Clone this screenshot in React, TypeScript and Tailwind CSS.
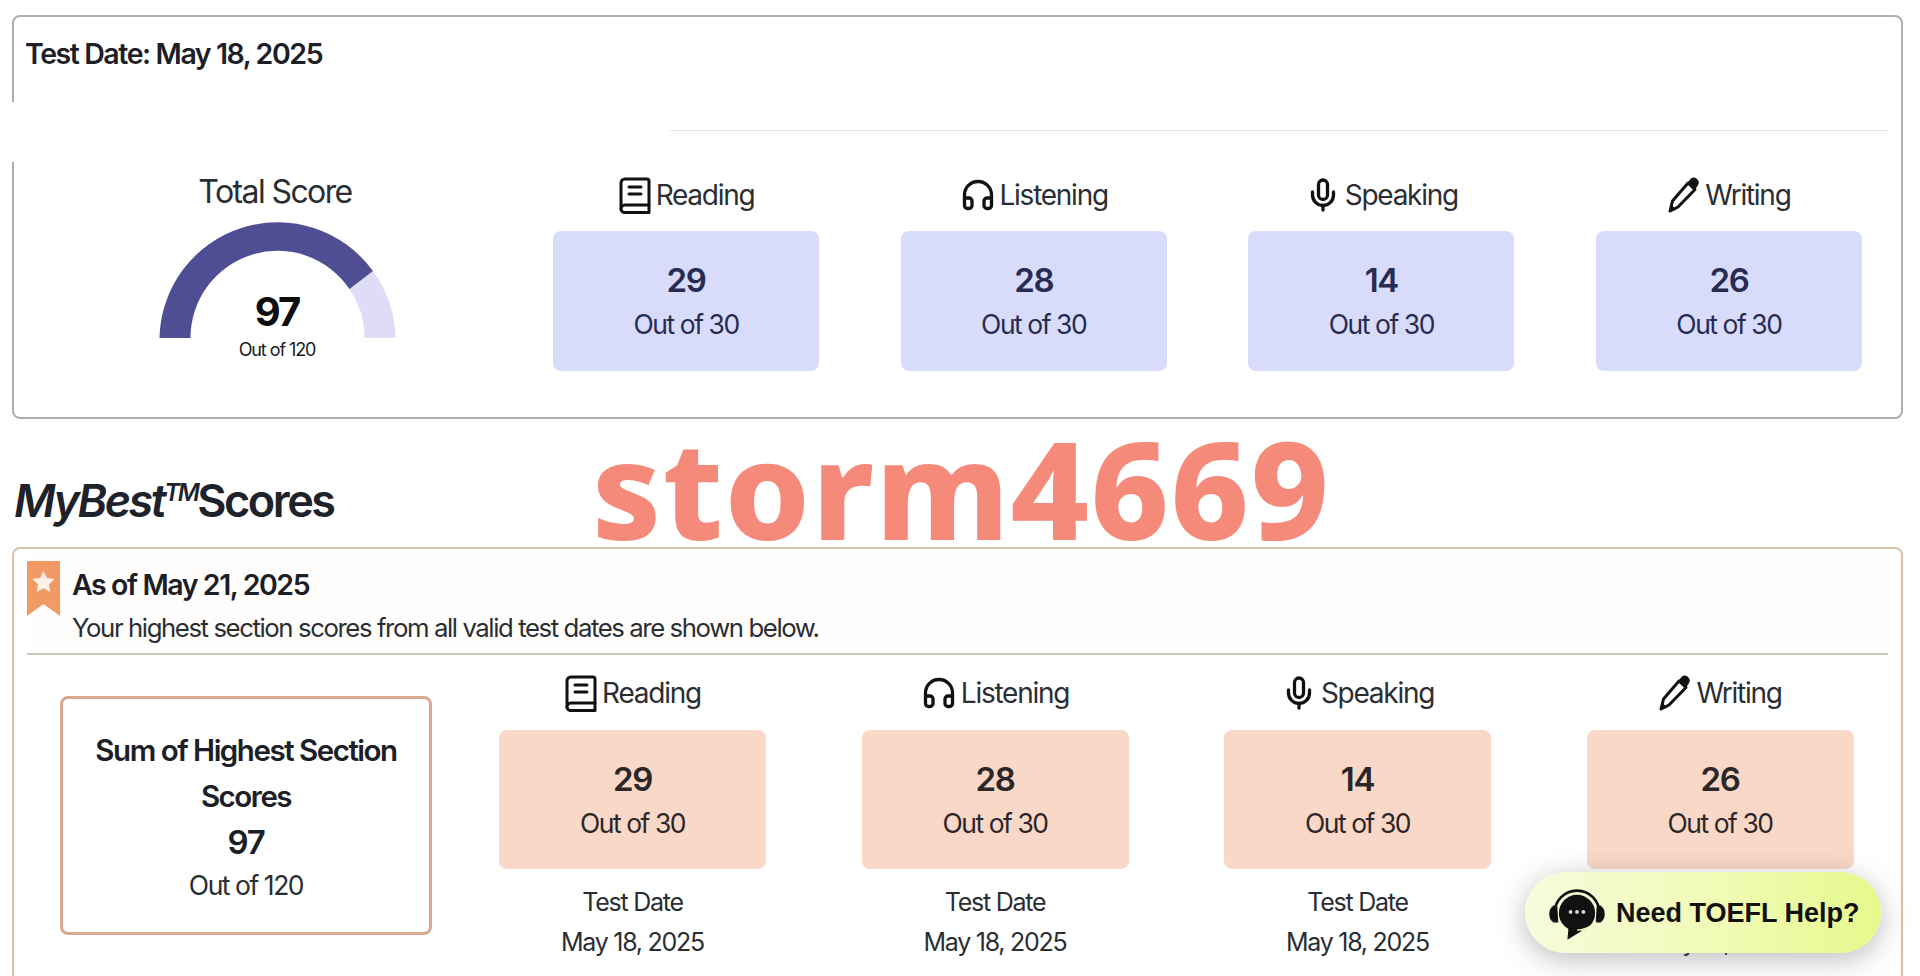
import React from 'react';
import { Headphones, Mic } from 'lucide-react';

const BookIcon = () => (
  <svg width="34" height="38" viewBox="0 0 34 38" fill="none" stroke="#111" strokeWidth="3" strokeLinejoin="round" strokeLinecap="round">
    <path d="M7 3h22a2 2 0 0 1 2 2v24H7a4 4 0 0 0-4 4V7a4 4 0 0 1 4-4z" />
    <path d="M3 33a3.5 3.5 0 0 0 4 3.5h24M31 29v7.5" />
    <path d="M11 11h12M11 18h12" />
  </svg>
);

const PencilIcon = () => (
  <svg width="34" height="38" viewBox="0 0 34 38">
    <path d="M3 35l2.5-10L21 7l7 6.5L11 31z" fill="none" stroke="#111" strokeWidth="3" strokeLinejoin="round" />
    <path d="M3 36l1.5-7 5 4.5zM20 7l4-4.5c1.5-1.5 4-1.5 6 .5s2.5 4 1 6l-3 5z" fill="#111" />
  </svg>
);

const sections = [
  { name: 'Reading', score: 29, icon: <BookIcon /> },
  { name: 'Listening', score: 28, icon: <Headphones size={36} strokeWidth={2.2} color="#111" /> },
  { name: 'Speaking', score: 14, icon: <Mic size={36} strokeWidth={2.2} color="#111" /> },
  { name: 'Writing', score: 26, icon: <PencilIcon /> },
];

function SectionLabel({ name, icon }: { name: string; icon: React.ReactNode }) {
  return (
    <div className="flex h-9 items-center justify-center gap-1 text-[28px] tracking-[-0.045em] text-[#2a2e33]">
      {icon}
      <span>{name}</span>
    </div>
  );
}

function Gauge() {
  return (
    <div className="relative ml-1 mt-3 h-[147px] w-[240px]">
      <svg width="240" height="120" viewBox="0 0 240 120">
        <path d="M 216 52 A 118 118 0 0 1 238.5 119 L 207.5 119 A 87 87 0 0 0 192 69.5 Z" fill="#dedcf6" />
        <path d="M 2.5 119 A 118 118 0 0 1 216 52 L 192.5 70 A 87 87 0 0 0 33.5 119 Z" fill="#4f4e94" />
      </svg>
      <div className="absolute left-0 top-[73px] w-full text-center text-[40px] font-bold leading-[40px] tracking-[-0.05em] text-[#0d0d0d]">97</div>
      <div className="absolute left-0 top-[121px] w-full text-center text-[18px] leading-5 tracking-[-0.06em] text-[#1c1c1c]">Out of 120</div>
    </div>
  );
}

export default function App() {
  return (
    <div className="relative h-[976px] overflow-hidden bg-white font-['Inter',sans-serif]">
      {/* Test date card */}
      <div className="relative ml-3 mr-[17px] mt-[15px] h-[404px] rounded-lg border-2 border-[#adaeb5] bg-white">
        <div className="pl-[11px] pt-[20px] text-[28.5px] font-semibold leading-[34px] tracking-[-0.05em] text-[#1c2026]">
          Test Date: May 18, 2025
        </div>
        <div className="mx-3 mt-[59px] h-px bg-[#e4e4e6]" />
        <div className="flex pt-[46px]">
          <div className="flex w-[522px] flex-col items-center">
            <div className="text-[32px] leading-[30px] tracking-[-0.05em] text-[#2a2e33]">Total Score</div>
            <Gauge />
          </div>
          <div className="ml-[17px] grid w-[1309px] grid-cols-4 gap-x-[81.5px]">
            {sections.map((s) => (
              <div key={s.name}>
                <SectionLabel name={s.name} icon={s.icon} />
                <div className="mt-[18px] flex h-[140px] flex-col items-center rounded-lg bg-[#d8dcfa] pt-[29px] text-[#272b52]">
                  <div className="text-[33px] font-semibold leading-10 tracking-[-0.04em]">{s.score}</div>
                  <div className="mt-2 text-[26.5px] leading-8 tracking-[-0.055em]">Out of 30</div>
                </div>
              </div>
            ))}
          </div>
        </div>
        {/* wiped strip over the divider and left border */}
        <div className="absolute -left-[2px] top-[85px] h-[60px] w-[658px] bg-white" />
      </div>

      <h2 className="ml-[14px] mt-[54px] h-14 text-[45px] font-semibold leading-[56px] tracking-[-0.055em] text-[#1d222b]">
        <span className="italic">MyBest</span>
        <span className="relative -top-4 text-[24px] italic">TM</span>
        <span>Scores</span>
      </h2>

      {/* MyBest card */}
      <div className="ml-3 mr-[17px] mt-[18px] h-[460px] rounded-lg border-2 border-[#d8c3a8] bg-white">
        <div className="mx-[13px] flex h-[106px] gap-3 border-b-2 border-[#c9c8b4] bg-[#fffefc] pt-3">
          <svg width="33" height="55" viewBox="0 0 33 55" className="shrink-0">
            <path d="M0 0h33v55L16.5 43 0 55z" fill="#f29a66" />
            <path d="M16.5 10l3.4 7 7.6 1-5.5 5.3 1.3 7.6-6.8-3.6-6.8 3.6 1.3-7.6L5.5 18l7.6-1z" fill="#fdf0e6" />
          </svg>
          <div className="pt-[7px]">
            <div className="text-[28.5px] font-semibold leading-[34px] tracking-[-0.05em] text-[#1c2026]">As of May 21, 2025</div>
            <div className="mt-[10px] text-[25.75px] leading-8 tracking-[-0.055em] text-[#2a2e33]">
              Your highest section scores from all valid test dates are shown below.
            </div>
          </div>
        </div>
        <div className="flex pl-[46px] pt-5">
          <div className="mt-[21px] flex h-[239px] w-[372px] shrink-0 flex-col items-center rounded-lg border-[3px] border-[#d9a98f] bg-white pt-[28px] text-center text-[#1c2026]">
            <div className="px-3 text-[29.5px] font-semibold leading-[46px] tracking-[-0.05em]">Sum of Highest Section Scores</div>
            <div className="text-[33px] font-semibold leading-[46px] tracking-[-0.04em]">97</div>
            <div className="text-[26.5px] leading-[40px] tracking-[-0.055em] text-[#2a2e33]">Out of 120</div>
          </div>
          <div className="ml-[67px] grid w-[1354.5px] shrink-0 grid-cols-4 gap-x-[95.5px]">
            {sections.map((s) => (
              <div key={s.name}>
                <SectionLabel name={s.name} icon={s.icon} />
                <div className="mt-[19px] flex h-[139px] flex-col items-center rounded-lg bg-[#f9d8c7] pt-[29px] text-[#2b2628]">
                  <div className="text-[33px] font-semibold leading-10 tracking-[-0.04em]">{s.score}</div>
                  <div className="mt-2 text-[26.5px] leading-8 tracking-[-0.055em]">Out of 30</div>
                </div>
                <div className="mt-[13px] text-center text-[25px] leading-10 tracking-[-0.05em] text-[#2a2e33]">
                  <div>Test Date</div>
                  <div>May 18, 2025</div>
                </div>
              </div>
            ))}
          </div>
        </div>
      </div>

      {/* watermark */}
      <div className="absolute left-[592px] top-[394px] font-['Noto_Sans',sans-serif] text-[136px] font-extrabold leading-[188px] tracking-[0.01em] text-[#f58a7b]">
        storm4669
      </div>

      {/* help widget */}
      <div className="absolute left-[1525px] top-[872px] flex h-[81px] w-[356px] items-center gap-[7px] rounded-full bg-gradient-to-r from-[#f6fbdc] via-[#f1fbb8] to-[#e6f98c] pl-5 font-['Liberation_Sans',sans-serif] shadow-[0_6px_28px_rgba(60,60,60,0.35)]">
        <svg width="64" height="64" viewBox="0 0 60 60" className="shrink-0">
          <path d="M9 30a21 21 0 0 1 42 0" fill="none" stroke="#111" strokeWidth="2.5" />
          <path d="M8 23h3.5l1 16H8c-3-2-4-5-4-8s1-6 4-8zM52 23h-3.5l-1 16H52c3-2 4-5 4-8s-1-6-4-8z" fill="#111" />
          <circle cx="30" cy="30" r="17" fill="#111" />
          <path d="M22 44l-1 11 13-8z" fill="#111" />
          <path d="M30 46c8 0 14-4 18-8" fill="none" stroke="#f1fbb8" strokeWidth="1.2" />
          <circle cx="24" cy="29" r="1.8" fill="#ddd" />
          <circle cx="30" cy="29" r="1.8" fill="#ddd" />
          <circle cx="36" cy="29" r="1.8" fill="#ddd" />
        </svg>
        <span className="whitespace-nowrap text-[27px] font-bold leading-8 text-[#111]">Need TOEFL Help?</span>
      </div>
    </div>
  );
}
